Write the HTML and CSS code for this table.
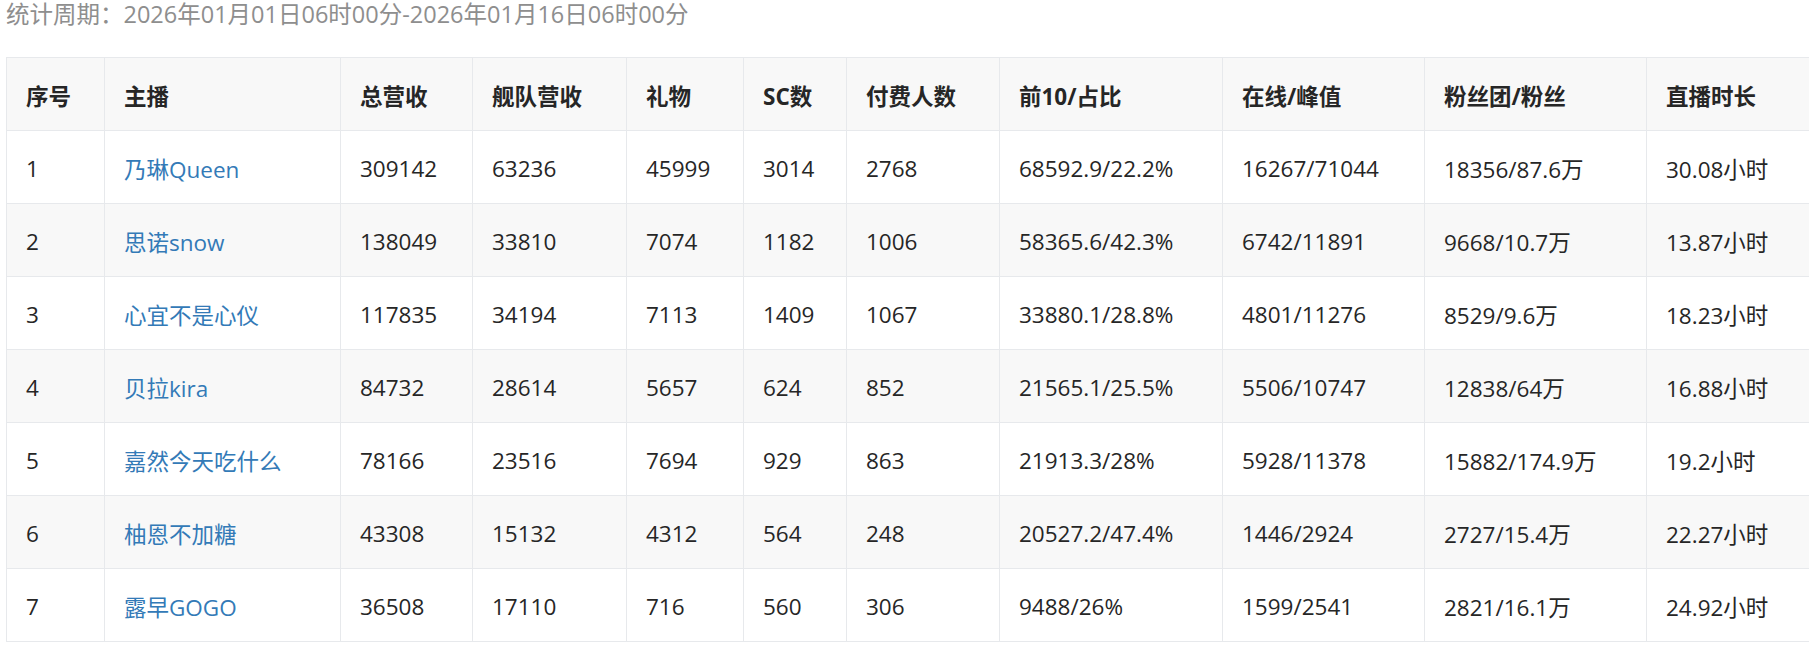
FILE: index.html
```html
<!DOCTYPE html>
<html lang="zh-CN">
<head>
<meta charset="utf-8">
<title>统计</title>
<link rel="stylesheet" href="styles.css">
</head>
<body>
<div class="period">统计周期：2026年01月01日06时00分-2026年01月16日06时00分</div>
<table class="rank">
  <colgroup>
    <col class="c1"><col class="c2"><col class="c3"><col class="c4"><col class="c5"><col class="c6"><col class="c7"><col class="c8"><col class="c9"><col class="c10"><col class="c11">
  </colgroup>
  <thead>
    <tr><th>序号</th><th>主播</th><th>总营收</th><th>舰队营收</th><th>礼物</th><th>SC数</th><th>付费人数</th><th>前10/占比</th><th>在线/峰值</th><th>粉丝团/粉丝</th><th>直播时长</th></tr>
  </thead>
  <tbody>
    <tr><td>1</td><td><a href="#">乃琳Queen</a></td><td>309142</td><td>63236</td><td>45999</td><td>3014</td><td>2768</td><td>68592.9/22.2%</td><td>16267/71044</td><td>18356/87.6万</td><td>30.08小时</td></tr>
    <tr><td>2</td><td><a href="#">思诺snow</a></td><td>138049</td><td>33810</td><td>7074</td><td>1182</td><td>1006</td><td>58365.6/42.3%</td><td>6742/11891</td><td>9668/10.7万</td><td>13.87小时</td></tr>
    <tr><td>3</td><td><a href="#">心宜不是心仪</a></td><td>117835</td><td>34194</td><td>7113</td><td>1409</td><td>1067</td><td>33880.1/28.8%</td><td>4801/11276</td><td>8529/9.6万</td><td>18.23小时</td></tr>
    <tr><td>4</td><td><a href="#">贝拉kira</a></td><td>84732</td><td>28614</td><td>5657</td><td>624</td><td>852</td><td>21565.1/25.5%</td><td>5506/10747</td><td>12838/64万</td><td>16.88小时</td></tr>
    <tr><td>5</td><td><a href="#">嘉然今天吃什么</a></td><td>78166</td><td>23516</td><td>7694</td><td>929</td><td>863</td><td>21913.3/28%</td><td>5928/11378</td><td>15882/174.9万</td><td>19.2小时</td></tr>
    <tr><td>6</td><td><a href="#">柚恩不加糖</a></td><td>43308</td><td>15132</td><td>4312</td><td>564</td><td>248</td><td>20527.2/47.4%</td><td>1446/2924</td><td>2727/15.4万</td><td>22.27小时</td></tr>
    <tr><td>7</td><td><a href="#">露早GOGO</a></td><td>36508</td><td>17110</td><td>716</td><td>560</td><td>306</td><td>9488/26%</td><td>1599/2541</td><td>2821/16.1万</td><td>24.92小时</td></tr>
  </tbody>
</table>
</body>
</html>
```

FILE: styles.css
```css
html, body {
  margin: 0;
  padding: 0;
  overflow: hidden;
  background: #fff;
}

body {
  font-family: "Open Sans", "Noto Sans CJK SC", sans-serif;
  color: #333;
}

.period {
  padding-left: 6px;
  font-size: 23.5px;
  line-height: 28px;
  color: #8e8e8e;
  margin-bottom: 29px;
}

.rank {
  margin-left: 6px;
  width: 1804px;
  border-collapse: collapse;
  table-layout: fixed;
  font-size: 22.5px;
}

.c1 { width: 98px; }
.c2 { width: 236px; }
.c3 { width: 132px; }
.c4 { width: 154px; }
.c5 { width: 117px; }
.c6 { width: 103px; }
.c7 { width: 153px; }
.c8 { width: 223px; }
.c9 { width: 202px; }
.c10 { width: 222px; }
.c11 { width: 164px; }

.rank th,
.rank td {
  border: 1px solid #e7e9ec;
  height: 73px;
  padding: 2px 19px 0;
  text-align: left;
  vertical-align: middle;
  white-space: nowrap;
  overflow: hidden;
  box-sizing: border-box;
}

.rank th {
  font-weight: bold;
  color: #262626;
}

.rank td {
  color: #262626;
}

.rank thead tr,
.rank tbody tr:nth-child(even) {
  background: #f8f8f8;
}

.rank a {
  color: #337ab7;
  text-decoration: none;
}
```
